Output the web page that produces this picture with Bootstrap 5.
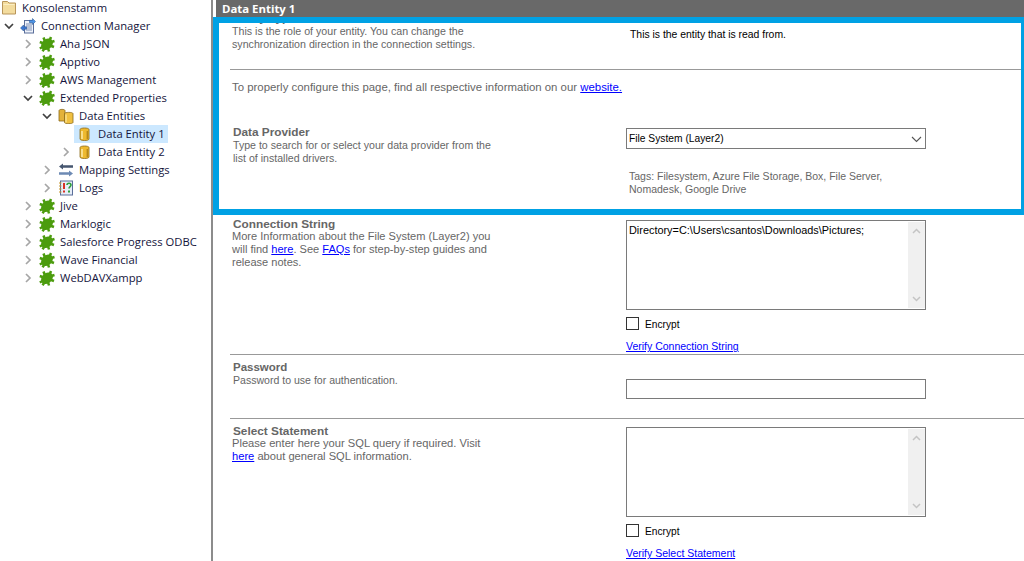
<!DOCTYPE html>
<html lang="en">
<head>
<meta charset="utf-8">
<title>Connection Manager</title>
<link href="https://cdn.jsdelivr.net/npm/bootstrap@5.3.0/dist/css/bootstrap.min.css" rel="stylesheet">
<style>
html,body{height:561px;overflow:hidden;background:#fff}
body{font-family:"Liberation Sans",Arial,sans-serif;font-size:11px;color:#666}
a{color:#00f}
.shell{height:561px;position:relative;overflow:hidden}
.tree{width:211px;flex:none;font-family:"Open Sans","Noto Sans",sans-serif;font-size:11.25px;color:#14143c;margin-top:-1px}
.tnode{height:18px;line-height:18px;white-space:nowrap}
.troot{padding-left:1px}
.chev{width:20px;flex:none}
.chev svg{display:block;margin-left:4px}
.tico{width:16px;height:16px;flex:none;margin-right:5px}
.nodesel{background:#cce8ff;margin-left:-3px;padding:0 3px}
.l1{padding-left:0}.l2{padding-left:19px}.l3{padding-left:38px}.l4{padding-left:57px}
.divider{width:5px;flex:none;background:linear-gradient(90deg,#8c8c8c 0,#8c8c8c 2px,#fff 2px)}
.panel{flex:1;min-width:0}
.phead{height:17px;line-height:17px;background:#696969;color:#fff;font-weight:700;font-size:11.4px;padding-left:6px;font-family:"Open Sans","Noto Sans",sans-serif;position:relative;z-index:1}
.sect{margin-left:14px;padding-left:2px;display:flex}
.sect-line{border-bottom:1px solid #999}
.lcol{width:394px;flex:none;line-height:13px;padding-top:1px}
.rcol{width:300px;flex:none;line-height:13px}
.ttl{font-weight:700;font-size:11.8px;line-height:13px;padding-left:1px;color:#666;margin-bottom:-1px}
.desc{width:262px}
.s1{height:53px}
.s1 .lcol{padding-top:0}
.s1 .ttl{margin-top:-5px;margin-bottom:0}
.s1 .desc{font-size:10.65px}
.s1 .rcol{padding:11px 0 0 4px;color:#000;font-size:10.4px}
.s2{height:54px;padding-top:9px;font-size:11.4px}
.s3{height:93px}
.s3 .lcol{padding-top:2px}
.s3 .ttl{margin-bottom:0}
.s3 .desc{font-size:10.6px;padding-left:1px}
.s3 .rcol{padding-top:4px}
.s4{height:138px}
.s4 .desc{font-size:11.05px}
.s4 .rcol{padding-top:3px}
.s5{height:64px;padding-top:5px}
.s5 .ttl{font-size:11.5px;margin-bottom:0}
.s5 .rcol{padding-top:19px}
.pdesc{font-size:10.55px;padding-left:1px}
.s6{padding-top:6px}
.s6 .lcol{padding-top:0}
.s6 .desc{font-size:11.15px}
.s6 .rcol{padding-top:2px}
.field{border:1px solid #7a7a7a;background:#fff;color:#000;width:300px;display:block}
.selbox{height:21px;line-height:19px;padding-left:2px;position:relative;font-size:10.25px}
.selbox svg{position:absolute;right:3px;top:7px}
.tags{padding:21px 0 0 3px;width:290px;font-size:10.5px}
.memo{height:90px;padding:3px 0 0 2px;position:relative;line-height:13px;font-size:10.9px}
.sbar{position:absolute;right:0;top:1px;bottom:1px;width:17px;background:#f0f0f0;display:flex;flex-direction:column;justify-content:space-between;align-items:center;padding:6px 0}
.txtbox{height:20px}
.chk{width:13px;height:13px;border:1px solid #333;flex:none}
.encr{color:#000;margin-top:7px;height:13px;line-height:15px;gap:6px;font-size:10.2px}
.verify{display:block;margin-top:10px;line-height:13px;font-size:10.5px}
.ring{position:absolute;left:213px;top:17px;width:814px;height:198px;border:6px solid #00a1e4;pointer-events:none;z-index:2}
</style>
</head>
<body>
<svg width="0" height="0" class="d-none" aria-hidden="true">
<symbol id="i-folder" viewBox="0 0 16 16"><path d="M1.500 1.500h5l1.500 1.500h6.500v11h-13z" fill="#f3dc9e" stroke="#b8955a"/><path d="M2.500 4.500h11" stroke="#fbeec4"/></symbol>
<symbol id="i-conn" viewBox="0 0 16 16"><rect x="4.500" y="2.500" width="9" height="12.500" fill="#eef2fa" stroke="#5a6e9a"/><path d="M6 6h6M6 8h6M6 10h6M6 12h6" stroke="#7f90b4"/><path d="M0.500 10l3-3v1.800h3v2.400h-3V13z" fill="#3b78d6" stroke="#1f4d8c" stroke-width=".5"/><path d="M15.500 3.500l-3-3v1.800h-3v2.400h3v1.800z" fill="#4d94e6" stroke="#1f4d8c" stroke-width=".5"/></symbol>
<symbol id="i-splat" viewBox="0 0 16 16"><g fill="#4c9c0e" stroke="#4c9c0e"><ellipse cx="8" cy="8.300" rx="6.500" ry="5" stroke="none" transform="rotate(-42 8 8.300)"/><path d="M12 1l-1.500 4M15.500 5l-4 1.200M.8 6l4 1.500M4.500 1.500l1.500 4M.8 12.500l3.500-2M3.500 15.300l2.500-3.500M10 15.500l-1-3.500M15 11l-4-1.500" stroke-width="2.500" fill="none"/></g></symbol>
<symbol id="i-dbs" viewBox="0 0 16 16"><path d="M1 2.500C1 1 7 1 7 2.500V13H1z" fill="#e3b23a" stroke="#8c6a1a" stroke-width=".8"/><path d="M6.500 5.500C6.500 4 15 4 15 5.500V14.500C15 16 6.500 16 6.500 14.500z" fill="#f0c040" stroke="#8c6a1a" stroke-width=".8"/><path d="M8 6.500v8" stroke="#fff0b0"/></symbol>
<symbol id="i-db" viewBox="0 0 16 16"><path d="M3 3.500C3 1.500 12 1.500 12 3.500V13C12 15 3 15 3 13z" fill="#eeb92f" stroke="#8c6a1a" stroke-width=".8"/><path d="M5 5v8" stroke="#fdeeb5" stroke-width="1.400"/><path d="M10.300 5v8" stroke="#b88818" stroke-width="1.400"/></symbol>
<symbol id="i-map" viewBox="0 0 16 16"><path d="M5 1.500L1 4.500l4 3V5.700h10V3.300H5z" fill="#46566f"/><path d="M11 8.500l4 3-4 3v-1.800H1v-2.400h10z" fill="#6d8ab4"/></symbol>
<symbol id="i-log" viewBox="0 0 16 16"><rect x="2.500" y="1" width="12" height="14" fill="#e6edf7" stroke="#5a6e9a"/><path d="M1 3h2.500M1 6h2.500M1 9h2.500M1 12h2.500" stroke="#c8952a" stroke-width="1.200"/><path d="M6 3v6" stroke="#d93025" stroke-width="2"/><rect x="5" y="10.500" width="2" height="2" fill="#d93025"/><path d="M9 5c0-2.400 4-2.400 4 0 0 1.600-2 1.600-2 3.500" fill="none" stroke="#2e9e3c" stroke-width="1.600"/><rect x="10" y="10.500" width="2" height="2" fill="#2e9e3c"/></symbol>
<symbol id="c-r" viewBox="0 0 10 10"><path d="M3 1l4 4-4 4" fill="none" stroke="#a6a6a6" stroke-width="1.700"/></symbol>
<symbol id="c-d" viewBox="0 0 10 10"><path d="M1 3l4 4 4-4" fill="none" stroke="#404040" stroke-width="1.700"/></symbol>
</svg>
<div class="shell d-flex">
  <nav class="tree">
    <div class="tnode d-flex align-items-center troot"><svg class="tico"><use href="#i-folder"/></svg><span>Konsolenstamm</span></div>
    <div class="tnode d-flex align-items-center l1"><span class="chev"><svg width="10" height="10"><use href="#c-d"/></svg></span><svg class="tico"><use href="#i-conn"/></svg><span>Connection Manager</span></div>
    <div class="tnode d-flex align-items-center l2"><span class="chev"><svg width="10" height="10"><use href="#c-r"/></svg></span><svg class="tico"><use href="#i-splat"/></svg><span>Aha JSON</span></div>
    <div class="tnode d-flex align-items-center l2"><span class="chev"><svg width="10" height="10"><use href="#c-r"/></svg></span><svg class="tico"><use href="#i-splat"/></svg><span>Apptivo</span></div>
    <div class="tnode d-flex align-items-center l2"><span class="chev"><svg width="10" height="10"><use href="#c-r"/></svg></span><svg class="tico"><use href="#i-splat"/></svg><span>AWS Management</span></div>
    <div class="tnode d-flex align-items-center l2"><span class="chev"><svg width="10" height="10"><use href="#c-d"/></svg></span><svg class="tico"><use href="#i-splat"/></svg><span>Extended Properties</span></div>
    <div class="tnode d-flex align-items-center l3"><span class="chev"><svg width="10" height="10"><use href="#c-d"/></svg></span><svg class="tico"><use href="#i-dbs"/></svg><span>Data Entities</span></div>
    <div class="tnode d-flex align-items-center l4"><span class="chev"></span><span class="nodesel d-flex align-items-center"><svg class="tico"><use href="#i-db"/></svg><span>Data Entity 1</span></span></div>
    <div class="tnode d-flex align-items-center l4"><span class="chev"><svg width="10" height="10"><use href="#c-r"/></svg></span><svg class="tico"><use href="#i-db"/></svg><span>Data Entity 2</span></div>
    <div class="tnode d-flex align-items-center l3"><span class="chev"><svg width="10" height="10"><use href="#c-r"/></svg></span><svg class="tico"><use href="#i-map"/></svg><span>Mapping Settings</span></div>
    <div class="tnode d-flex align-items-center l3"><span class="chev"><svg width="10" height="10"><use href="#c-r"/></svg></span><svg class="tico"><use href="#i-log"/></svg><span>Logs</span></div>
    <div class="tnode d-flex align-items-center l2"><span class="chev"><svg width="10" height="10"><use href="#c-r"/></svg></span><svg class="tico"><use href="#i-splat"/></svg><span>Jive</span></div>
    <div class="tnode d-flex align-items-center l2"><span class="chev"><svg width="10" height="10"><use href="#c-r"/></svg></span><svg class="tico"><use href="#i-splat"/></svg><span>Marklogic</span></div>
    <div class="tnode d-flex align-items-center l2"><span class="chev"><svg width="10" height="10"><use href="#c-r"/></svg></span><svg class="tico"><use href="#i-splat"/></svg><span>Salesforce Progress ODBC</span></div>
    <div class="tnode d-flex align-items-center l2"><span class="chev"><svg width="10" height="10"><use href="#c-r"/></svg></span><svg class="tico"><use href="#i-splat"/></svg><span>Wave Financial</span></div>
    <div class="tnode d-flex align-items-center l2"><span class="chev"><svg width="10" height="10"><use href="#c-r"/></svg></span><svg class="tico"><use href="#i-splat"/></svg><span>WebDAVXampp</span></div>
  </nav>
  <div class="divider"></div>
  <main class="panel">
    <div class="phead">Data Entity 1</div>
    <section class="sect sect-line s1">
      <div class="lcol"><div class="ttl">Entity Type</div><div class="desc">This is the role of your entity. You can change the synchronization direction in the connection settings.</div></div>
      <div class="rcol">This is the entity that is read from.</div>
    </section>
    <section class="sect s2"><div>To properly configure this page, find all respective information on our <a href="#">website.</a></div></section>
    <section class="sect s3">
      <div class="lcol"><div class="ttl">Data Provider</div><div class="desc">Type to search for or select your data provider from the list of installed drivers.</div></div>
      <div class="rcol"><div class="field selbox">File System (Layer2)<svg width="11" height="7" viewBox="0 0 11 7"><path d="M1 1l4.500 4.500L10 1" fill="none" stroke="#555" stroke-width="1.100"/></svg></div><div class="tags">Tags: Filesystem, Azure File Storage, Box, File Server, Nomadesk, Google Drive</div></div>
    </section>
    <section class="sect sect-line s4">
      <div class="lcol"><div class="ttl">Connection String</div><div class="desc">More Information about the File System (Layer2) you will find <a href="#">here</a>. See <a href="#">FAQs</a> for step-by-step guides and release notes.</div></div>
      <div class="rcol">
        <div class="field memo">Directory=C:\Users\csantos\Downloads\Pictures;<div class="sbar"><svg width="9" height="6" viewBox="0 0 9 6"><path d="M1 5l3.500-3.500L8 5" fill="none" stroke="#c4c4c4" stroke-width="1.500"/></svg><svg width="9" height="6" viewBox="0 0 9 6"><path d="M1 1l3.500 3.500L8 1" fill="none" stroke="#c4c4c4" stroke-width="1.500"/></svg></div></div>
        <div class="encr d-flex align-items-start"><span class="chk"></span>Encrypt</div>
        <a class="verify" href="#">Verify Connection String</a>
      </div>
    </section>
    <section class="sect sect-line s5">
      <div class="lcol"><div class="ttl">Password</div><div class="pdesc">Password to use for authentication.</div></div>
      <div class="rcol"><div class="field txtbox"></div></div>
    </section>
    <section class="sect s6">
      <div class="lcol"><div class="ttl">Select Statement</div><div class="desc">Please enter here your SQL query if required. Visit <a href="#">here</a> about general SQL information.</div></div>
      <div class="rcol">
        <div class="field memo"><div class="sbar"><svg width="9" height="6" viewBox="0 0 9 6"><path d="M1 5l3.500-3.500L8 5" fill="none" stroke="#c4c4c4" stroke-width="1.500"/></svg><svg width="9" height="6" viewBox="0 0 9 6"><path d="M1 1l3.500 3.500L8 1" fill="none" stroke="#c4c4c4" stroke-width="1.500"/></svg></div></div>
        <div class="encr d-flex align-items-start"><span class="chk"></span>Encrypt</div>
        <a class="verify" href="#">Verify Select Statement</a>
      </div>
    </section>
  </main>
  <div class="ring"></div>
</div>
<script src="https://cdn.jsdelivr.net/npm/bootstrap@5.3.0/dist/js/bootstrap.bundle.min.js"></script>
</body>
</html>
